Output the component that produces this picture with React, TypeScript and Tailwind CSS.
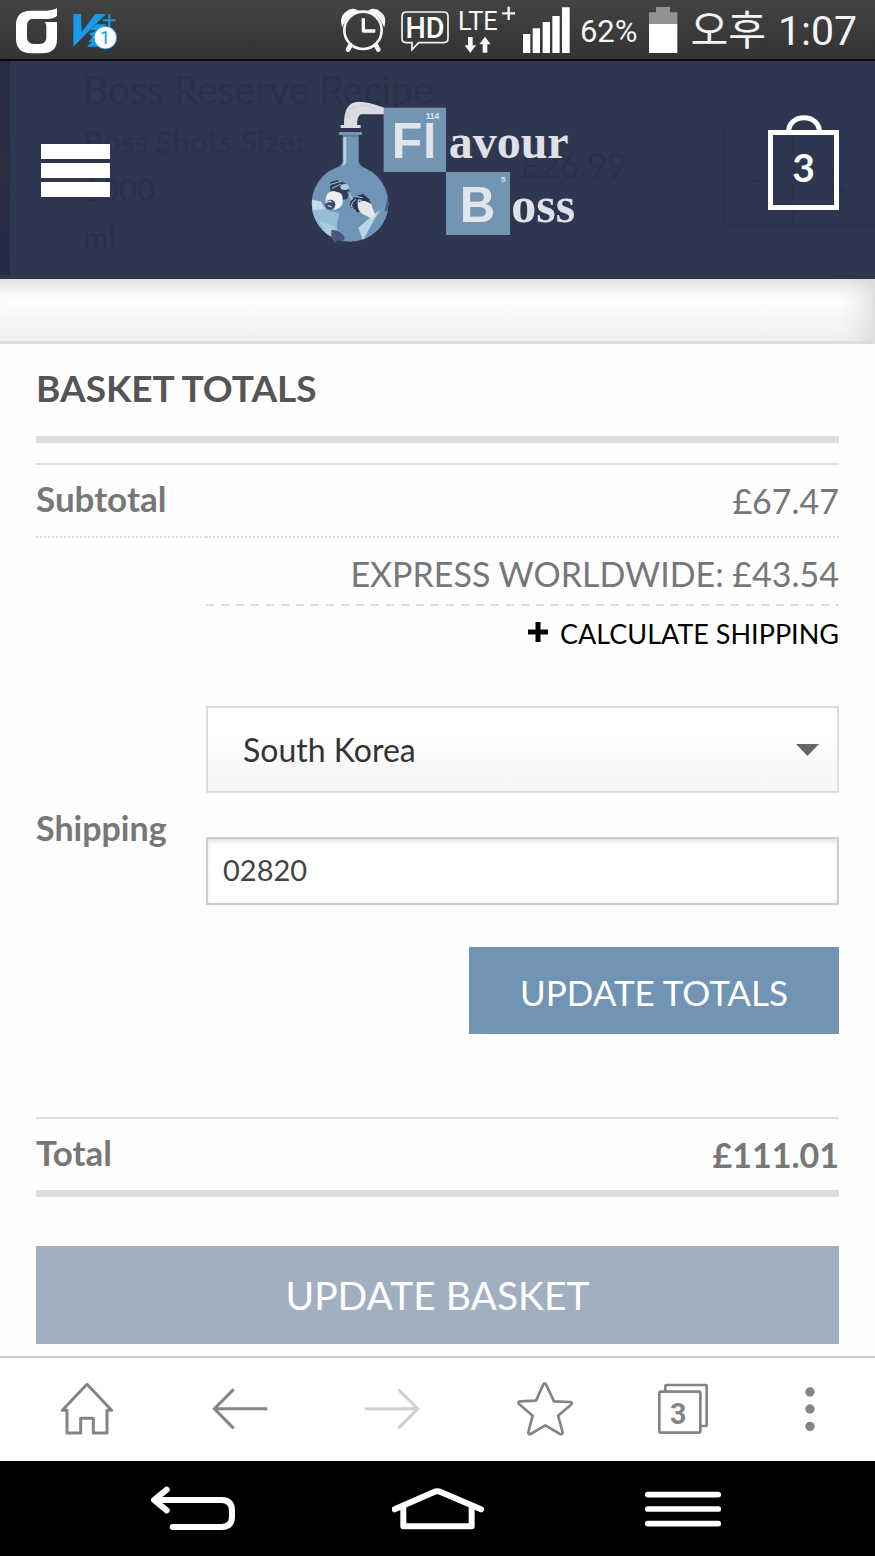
import { useState } from "react";
import type { ReactNode } from "react";

const COUNTRIES = ["South Korea", "United Kingdom", "United States", "Japan"];

function StatusBar() {
  return (
    <div className="flex h-[61px] justify-between border-b-2 border-[#08080a] bg-gradient-to-b from-[#434343] to-[#333333] pl-4 pr-[18px] text-[#f4f4f4]">
      <div className="flex gap-4">
        {/* carrier */}
        <svg className="h-[59px] w-[41px]" viewBox="47 0 123 177" fill="white">
          <path d="M170 24v24q-10 9-30 9H95q-15 1-15 21v34q0 20 22 20h16q20 0 20-20V80q0-10-5-14h37v52q0 42-45 42H93q-46 0-46-45V75q0-43 45-43h48q20-1 30-8z" />
        </svg>
        {/* antivirus badge */}
        <svg className="h-[59px] w-[45px]" viewBox="218 0 135 177">
          <path d="M219 42h23l2 54 41-54h32l-98 98z" fill="#159be9" />
          <path d="M288 73h30l-20 18h-28zM266 100l26-8v48h-32l14-14h-10l12-14z" fill="#159be9" />
          <path d="M308 61h38M327 42v38" stroke="#159be9" strokeWidth="6" />
          <circle cx="315" cy="113" r="34" fill="white" stroke="#159be9" strokeWidth="3" />
          <text x="314" y="132" textAnchor="middle" fontSize="56" fill="#159be9" className="font-[Roboto,sans-serif]">1</text>
        </svg>
      </div>
      <div className="flex items-center gap-2 font-[Roboto,'Noto_Sans_CJK_KR',sans-serif]">
        <svg className="h-[59px] w-[52px]" viewBox="66 0 156 177" fill="none" stroke="#f8f8f8">
          <path d="M70 76q-6-26 10-38 18-15 34-6-30 12-44 44zM195 76q6-26-10-38-18-15-34-6 30 12 44 44z" fill="#f8f8f8" strokeWidth="4" />
          <circle cx="132" cy="91" r="56" strokeWidth="8" />
          <path d="M133 55v38h36" strokeWidth="10" strokeLinejoin="round" />
          <path d="M94 136l-7 13M171 136l7 13" strokeWidth="14" strokeLinecap="round" />
        </svg>
        <svg className="h-[59px] w-[50px]" viewBox="246 0 150 177">
          <path
            d="M262 36h112q13 0 13 13v66q0 13-13 13h-75l-20 21v-21h-17q-13 0-13-13V49q0-13 13-13z"
            fill="none"
            stroke="#f4f4f4"
            strokeWidth="5"
          />
          <text x="318" y="113" textAnchor="middle" fontSize="86" fontWeight="500" fill="white" className="font-[Roboto,sans-serif]">HD</text>
        </svg>
        <svg className="h-[59px] w-[56px]" viewBox="420 0 168 177" fill="#f8f8f8">
          <text x="417" y="89" fontSize="76" className="font-[Roboto,sans-serif]">LTE</text>
          <path d="M549 40h39M569 20v40" stroke="#f8f8f8" strokeWidth="7" />
          <path d="M447 111h14v25h10l-17 23-17-23h10zM491 158h14v-25h10l-17-23-17 23h10z" />
        </svg>
        <svg className="h-[59px] w-[49px]" viewBox="612 0 147 177" fill="white">
          <path d="M612 102h22v57h-22zM641 85h22v74h-22zM671 66h22v93h-22zM700 48h22v111h-22zM729 22h23v137h-23z" />
        </svg>
        <span className="pt-1 text-[31px] leading-none">62%</span>
        <svg className="h-[59px] w-[37px]" viewBox="228 0 111 177">
          <path d="M240 37h21V21h42v16h22v36h-85z" fill="#929292" />
          <path d="M240 72h85v87h-85z" fill="white" />
        </svg>
        <span className="flex gap-3 pt-1 text-[41px] leading-none">
          <span>오후</span>
          <span>1:07</span>
        </span>
      </div>
    </div>
  );
}

// Basket rows that scrolled under the translucent header
function ScrolledRows() {
  return (
    <div aria-hidden="true" className="absolute inset-0 flex overflow-hidden text-[#2a304a]">
      <div className="mb-1 w-[10px] shrink-0 bg-gradient-to-b from-[#272b45] via-[#2d2d42] to-[#25294a]" />
      <div className="w-[428px] shrink-0 pl-[73px]">
        <div className="whitespace-nowrap text-[39px] leading-[56px]">Boss Reserve Recipe</div>
        <div className="text-[31px] leading-[48px]">
          <b className="text-[#2b304b]">Boss Shots Size:</b>
          <div>1000</div>
          <div>ml</div>
        </div>
      </div>
      <div className="w-[284px] shrink-0 pl-[82px] pt-[82px] text-[34px] leading-[44px]">£26.99</div>
      <div className="mt-[66px] flex h-[99px] flex-1 border-y-2 border-[#2d334d] text-[32px] leading-[99px]">
        <div className="w-[72px] border-x-2 border-[#2d334d] pl-[26px]">-</div>
        <div className="pl-[34px]">1</div>
      </div>
    </div>
  );
}

function Logo() {
  return (
    <svg className="h-[146px] w-[276px] shrink-0" viewBox="33 36 828 438" role="img" aria-label="Flavour Boss">
      <defs>
        <clipPath id="bulb">
          <circle cx="180" cy="355" r="115" />
        </clipPath>
      </defs>
      {/* spout */}
      <path d="M162 122q-2-72 44-72 30 0 77 18v20h-70q-12 4-12 34z" fill="#dadce3" />
      <path d="M172 98q4-32 26-34M214 60q24 2 42 14" fill="none" stroke="#cdd0d9" strokeWidth="4" />
      <path d="M152 120h60v9h-60z" fill="#dadce3" />
      {/* flask */}
      <path d="M147 141h69v9h-10v80q4 16 30 24H128q27-10 30-24v-80h-11z" fill="#7296b5" />
      <path d="M160 156h9v76q-3 8-14 16l-10 4q15-10 15-22z" fill="#b8d0e2" />
      <path d="M158 150h48v5h-48z" fill="#587b9e" />
      <circle cx="180" cy="355" r="115" fill="#6f94b5" />
      <g clipPath="url(#bulb)">
        <path d="M65 342l28 8 17 24 38 11-8 36 8 50H65z" fill="#96bcd8" />
        <path d="M65 345l28 5 12 22-36 3z" fill="#c4dbe9" />
        <path d="M88 408l45 16 14 46h-28z" fill="#abcbe0" />
        <path d="M296 352l-24 25-32 20-35 31 14 40 77-55z" fill="#86aecd" />
        <path d="M268 375l-63 53 14 38 36-65z" fill="#b9d4e4" />
        <path d="M219 466l36-65 41-49v60z" fill="#7196b6" />
        <path d="M292 338l-8 39 14 5v-44z" fill="#49628a" />
      </g>
      <path d="M124 435q27-2 41 24l-9 12-12-5-10 8-10-16z" fill="#48577f" />
      {/* gas masks */}
      <path d="M121 292l20-6 24 9 14 26-8 21-31 7-20-19z" fill="#323b58" />
      <path d="M119 299l35-10M126 310l27-13M173 319l12 26M179 322l9 25" fill="none" stroke="#a9c7dc" strokeWidth="3" />
      <ellipse cx="164" cy="306" rx="13" ry="9" fill="#a9cce0" />
      <path d="M112 326q12-13 28-5 18 1 18 19 3 18-8 27-12 11-25 5-16-2-17-16-4-13 4-30z" fill="#eceef2" />
      <circle cx="121" cy="359" r="15" fill="#3a486c" />
      <path d="M108 354q9-9 17-2M113 361l12 5" fill="none" stroke="#c8d5e2" strokeWidth="4" />
      <path d="M181 350l17-18 22-5 18 16 6 18-10 13-33 8-20-15z" fill="#303851" />
      <path d="M183 366q2-17 15-23M195 334l23 4M198 379q-14-8-14-19" fill="none" stroke="#b4cbdd" strokeWidth="3" />
      <circle cx="209" cy="350" r="7" fill="#a5c3d8" />
      <circle cx="209" cy="350" r="3" fill="#303851" />
      <path d="M203 355q13-12 27-5 17 5 17 18l9 22-10 11-24-12q-21-9-19-34z" fill="#e6e7ed" />
      {/* element tiles */}
      <path d="M281 68h187v193H281zM468 261h192v189H468z" fill="#7295b4" />
      <g fill="#e4e5eb" fontWeight="700" className="font-['Liberation_Sans',sans-serif]">
        <text x="305" y="220" fontSize="150">F</text>
        <text x="399" y="220" fontSize="143">l</text>
        <text x="407" y="102" fontSize="25">114</text>
        <text x="509" y="412" fontSize="148">B</text>
        <text x="633" y="291" fontSize="24">5</text>
      </g>
      {/* worn print */}
      <path
        d="M299 88h4M430 240h3M372 86h3M450 200h3M292 150h3M486 291h3M500 427h3M632 422h3M610 340h3M560 437h3M645 310h3M336 244h3M360 236h4M540 282h3M590 290h3"
        stroke="#5f84a6"
        strokeWidth="3"
      />
      <g fill="#e0e1e8" fontWeight="700" className="font-['Liberation_Serif',serif]">
        <text x="476" y="218" fontSize="144">avour</text>
        <text x="664" y="410" fontSize="150">oss</text>
      </g>
    </svg>
  );
}

function SiteHeader() {
  return (
    <header className="relative bg-[#2f3650]">
      <ScrolledRows />
      <div className="relative flex h-[218px] items-center justify-between pl-[41px] pr-9">
        <button aria-label="Menu" className="flex w-[69px] flex-col gap-1">
          <span className="h-[15px] bg-white" />
          <span className="h-[15px] bg-white" />
          <span className="h-[15px] bg-white" />
        </button>
        <a href="#home">
          <Logo />
        </a>
        <a href="#basket" className="flex flex-col items-center pb-4 text-white">
          <svg className="h-[15px] w-9" viewBox="0 0 36 15" fill="none" stroke="white" strokeWidth="5">
            <path d="M2.500 17C2.500-2 33.500-2 33.500 17" />
          </svg>
          <span className="flex h-20 w-[71px] items-center justify-center border-[5px] border-white pb-1 text-[39px] font-bold leading-none">3</span>
        </a>
      </div>
    </header>
  );
}

function BasketTotals() {
  const [country, setCountry] = useState(COUNTRIES[0]);
  const [postcode, setPostcode] = useState("02820");
  const [open, setOpen] = useState(true);

  return (
    <main className="flex-1 px-9 pb-3 pt-[22px] text-[#777777]">
      <h2 className="border-b-[7px] border-[#dddddd] pb-[26px] text-[37px] font-bold leading-[44px] text-[#555555]">BASKET TOTALS</h2>
      <table className="mt-5 w-full border-separate border-spacing-0 border-b-[7px] border-t-2 border-[#dddddd] text-[34px]">
        <tbody>
          <tr>
            <th className="w-[170px] border-b-2 border-dotted border-[#dddddd] pb-1 text-left text-[35px] leading-[67px]">Subtotal</th>
            <td className="border-b-2 border-dotted border-[#dddddd] text-right leading-[71px]">£67.47</td>
          </tr>
          <tr>
            <th className="text-left">Shipping</th>
            <td className="pb-[83px]">
              <div className="pb-2 pt-[13px] text-right leading-[45px]">EXPRESS WORLDWIDE: £43.54</div>
              <div className="h-[2px] bg-[repeating-linear-gradient(to_right,#dddddd_0_8px,transparent_8px_15px)]" />
              <div className="flex flex-col items-end">
                <button
                  type="button"
                  onClick={() => setOpen(!open)}
                  aria-expanded={open}
                  className="mt-2 flex items-center gap-3 text-[27px] leading-10 text-black"
                >
                  <svg className="mb-1 size-5" viewBox="0 0 20 20" stroke="black" strokeWidth="5">
                    <path d="M0 10h20M10 0v20" />
                  </svg>
                  CALCULATE SHIPPING
                </button>
                {open && (
                  <>
                    <div className="relative mt-[52px] w-full">
                      <select
                        aria-label="Country"
                        value={country}
                        onChange={(e) => setCountry(e.target.value)}
                        className="h-[87px] w-full appearance-none border-2 border-[#dddddd] bg-gradient-to-b from-white from-35% to-[#f7f7f7] to-75% pl-[35px] text-[32px] text-[#333333]"
                      >
                        {COUNTRIES.map((c) => (
                          <option key={c}>{c}</option>
                        ))}
                      </select>
                      <svg className="pointer-events-none absolute right-5 top-[38px] h-3 w-[23px]" viewBox="0 0 23 12" fill="#666666">
                        <path d="M0 0h23L11.500 12z" />
                      </svg>
                    </div>
                    <input
                      aria-label="Postcode"
                      value={postcode}
                      onChange={(e) => setPostcode(e.target.value)}
                      className="mt-11 h-[68px] w-full border-2 border-[#cccccc] bg-white px-[15px] pb-1 text-[29px] text-[#444444] shadow-[inset_0_3px_4px_#e6e6e6]"
                    />
                    <button type="button" className="mt-[42px] h-[87px] w-[370px] bg-[#7194b5] pt-1 text-[35px] text-white">
                      UPDATE TOTALS
                    </button>
                  </>
                )}
              </div>
            </td>
          </tr>
          <tr>
            <th className="border-t-2 border-[#dddddd] pb-1 text-left text-[35px] leading-[67px]">Total</th>
            <td className="border-t-2 border-[#dddddd] text-right font-bold leading-[71px]">£111.01</td>
          </tr>
        </tbody>
      </table>
      <button type="button" className="mt-[49px] h-[98px] w-full bg-[#a0b0c1] text-[39px] text-white">
        UPDATE BASKET
      </button>
    </main>
  );
}

function ToolButton({ label, children }: { label: string; children: ReactNode }) {
  return (
    <button aria-label={label} className="shrink-0">
      {children}
    </button>
  );
}

function BrowserBar() {
  return (
    <nav className="flex h-[105px] items-center justify-between border-t-2 border-[#cccccc] bg-white px-[60px] pb-1">
      <ToolButton label="Home">
        <svg className="h-[60px] w-[67px]" viewBox="181 83 201 180" fill="none" stroke="#848484" strokeWidth="9" strokeLinejoin="round">
          <path d="M262 102l-74 78h14v68h41v-44h38v44h41v-68h14z" />
        </svg>
      </ToolButton>
      <ToolButton label="Back">
        <svg className="h-[60px] w-[67px]" viewBox="636 83 201 180" fill="none" stroke="#848484" strokeWidth="9">
          <path d="M802 175H643M701 117l-58 58 58 59" />
        </svg>
      </ToolButton>
      <ToolButton label="Forward">
        <svg className="h-[60px] w-[67px]" viewBox="1089 83 201 180" fill="none" stroke="#d0d0d0" strokeWidth="9">
          <path d="M1091 175h159M1192 117l58 58-58 59" />
        </svg>
      </ToolButton>
      <ToolButton label="Bookmarks">
        <svg className="h-[60px] w-[56px]" viewBox="228 83 168 180" fill="none" stroke="#848484" strokeWidth="8" strokeLinejoin="round">
          <path d="M307 102q4-6 8 0l24 51 49 2q8 2 2 8l-39 33 14 50q0 8-8 5l-44-26-44 26q-8 2-7-6l13-49-40-34q-6-7 2-9l48-2z" />
        </svg>
      </ToolButton>
      <ToolButton label="Tabs">
        <svg className="h-[60px] w-[62px]" viewBox="654 83 186 180" fill="none" stroke="#848484" strokeWidth="8">
          <rect x="658" y="124" width="123" height="123" rx="4" />
          <path d="M676 122v-14q0-4 4-4h116q4 0 4 4v115q0 4-4 4h-13" />
          <text x="715" y="221" textAnchor="middle" fontSize="86" fontWeight="700" fill="#848484" stroke="none" className="font-[Roboto,sans-serif]">3</text>
        </svg>
      </ToolButton>
      <ToolButton label="More">
        <svg className="h-[60px] w-[10px]" viewBox="1092 83 30 180" fill="#848484">
          <circle cx="1107" cy="125" r="14" />
          <circle cx="1107" cy="176" r="14" />
          <circle cx="1107" cy="228" r="14" />
        </svg>
      </ToolButton>
    </nav>
  );
}

function SystemBar() {
  return (
    <nav className="flex h-[95px] items-center justify-between bg-black pl-[151px] pr-[154px]">
      <ToolButton label="System back">
        <svg className="h-12 w-[84px]" viewBox="453 406 252 144" fill="none" stroke="white" strokeWidth="18" strokeLinecap="round" strokeLinejoin="round">
          <path d="M500 420l-38 31 38 31M466 451h198q32 0 32 32v17q0 32-32 32H518" />
        </svg>
      </ToolButton>
      <ToolButton label="System home">
        <svg className="h-12 w-[96px]" viewBox="1176 406 288 144" fill="none" stroke="white" strokeWidth="18" strokeLinecap="round" strokeLinejoin="round">
          <path d="M1184 479l120-53q8-3 16 0l123 53M1210 470v60h205v-60" />
        </svg>
      </ToolButton>
      <ToolButton label="System menu">
        <svg className="h-12 w-[76px]" viewBox="615 406 228 144" stroke="white" strokeWidth="17" strokeLinecap="round">
          <path d="M623 435h212M623 478h212M623 522h212" />
        </svg>
      </ToolButton>
    </nav>
  );
}

export default function App() {
  return (
    <div className="flex min-h-screen flex-col bg-[#fefefe] font-[Lato,sans-serif]">
      <StatusBar />
      <SiteHeader />
      <div className="h-[65px] border-b-[3px] border-r-2 border-[#dddddd] bg-gradient-to-b from-[#fcfcfc] from-40% to-[#f0f0f0] shadow-[inset_0_20px_18px_-16px_#d4d3d9,inset_-30px_0_30px_-24px_#d8d8d8]" />
      <BasketTotals />
      <BrowserBar />
      <SystemBar />
    </div>
  );
}
